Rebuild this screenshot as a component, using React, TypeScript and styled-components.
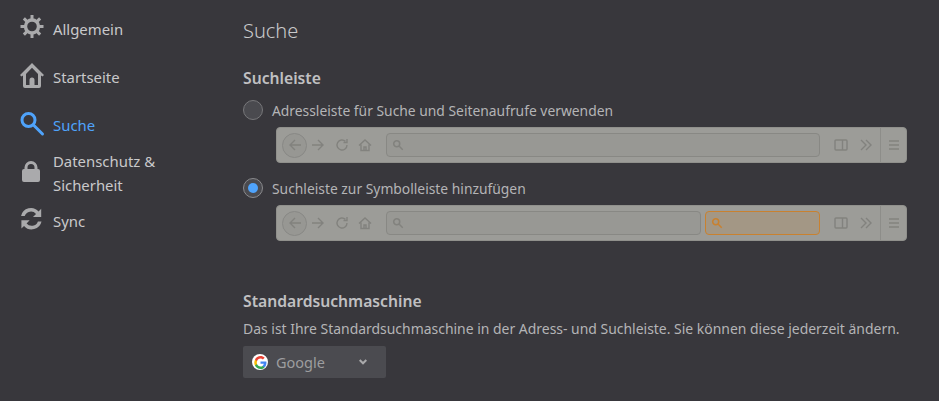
import React from "react";
import styled, { createGlobalStyle } from "styled-components";

const GlobalStyle = createGlobalStyle`
  html, body {
    margin: 0;
    padding: 0;
    background-color: #38373c;
    overflow: hidden;
  }
  body {
    font-family: "Noto Sans", "Open Sans", sans-serif;
    color: #c6c6c8;
  }
`;

const Page = styled.div`
  display: flex;
  width: 939px;
  height: 401px;
  background-color: #38373c;
  overflow: hidden;
`;

const Sidebar = styled.nav`
  width: 243px;
  flex: none;
  padding: 5px 0 0 20px;
  box-sizing: border-box;
  display: flex;
  flex-direction: column;
`;

const NavItem = styled.div<{ $active?: boolean }>`
  height: 48px;
  display: flex;
  align-items: center;
  gap: 9px;
  color: ${(p) => (p.$active ? "#4fa3fb" : "#c9c9cb")};
  font-size: 14.9px;
  line-height: 24px;
`;

const NavIcon = styled.svg`
  width: 24px;
  height: 24px;
  flex: none;
  fill: #aaaaac;
  overflow: visible;
`;

const NavLabel = styled.span`
  width: 130px;
`;

const Content = styled.main`
  flex: 1;
  padding: 15px 32px 0 0;
  min-width: 0;
`;

const Title = styled.h1`
  margin: 0;
  font-size: 20px;
  font-weight: 300;
  line-height: 32px;
  color: #c9c9cb;
`;

const SectionTitle = styled.h2<{ $top: number }>`
  margin: ${(p) => p.$top}px 0 0;
  font-size: 15.7px;
  font-weight: 600;
  line-height: 24px;
  color: #c0c0c2;
`;

const RadioRow = styled.div`
  display: flex;
  align-items: center;
  height: 20px;
  gap: 9px;
  font-size: 13.85px;
  color: #b4b4b6;
`;

const Radio = styled.span<{ $checked?: boolean }>`
  width: 20px;
  height: 20px;
  box-sizing: border-box;
  flex: none;
  border-radius: 50%;
  border: 1px solid ${(p) => (p.$checked ? "#8a8a8d" : "#77777a")};
  background-color: #4a4a4f;
  display: flex;
  align-items: center;
  justify-content: center;

  &::after {
    content: "";
    display: ${(p) => (p.$checked ? "block" : "none")};
    width: 10px;
    height: 10px;
    border-radius: 50%;
    background-color: #4fa3fb;
  }
`;

const Option = styled.div<{ $top: number }>`
  margin-top: ${(p) => p.$top}px;
`;

const Toolbar = styled.div`
  box-sizing: border-box;
  margin: 7px 0 0 33px;
  width: 631px;
  height: 36px;
  background-color: #9c9c98;
  border: 1px solid #90908c;
  border-radius: 4px;
  display: flex;
  align-items: center;
  padding: 0 5px;
`;

const BackButton = styled.span`
  width: 25px;
  height: 25px;
  box-sizing: border-box;
  flex: none;
  border-radius: 50%;
  border: 1px solid #888885;
  background-color: #979793;
  display: flex;
  align-items: center;
  justify-content: center;
`;

const ToolIcon = styled.svg<{ $left?: number }>`
  flex: none;
  width: 14px;
  height: 14px;
  margin-left: ${(p) => p.$left ?? 0}px;
  fill: none;
  stroke: #82827e;
  stroke-width: 1.4;
`;

const UrlBar = styled.div`
  box-sizing: border-box;
  height: 24px;
  flex: 1;
  margin-left: 14px;
  border-radius: 4px;
  border: 1px solid #888884;
  background-color: #989894;
  display: flex;
  align-items: center;
  padding-left: 5px;
`;

const SearchBar = styled(UrlBar)`
  flex: none;
  width: 115px;
  margin-left: 4px;
  border-color: #c9812f;
  background-color: #a39785;
`;

const Divider = styled.span`
  width: 1px;
  align-self: stretch;
  background-color: #8d8d89;
  margin-left: 7px;
`;

const Description = styled.p`
  margin: 4px 0 0;
  font-size: 13.94px;
  line-height: 24px;
  color: #b4b4b6;
  white-space: nowrap;
`;

const Select = styled.div`
  margin-top: 5px;
  box-sizing: border-box;
  width: 143px;
  height: 32px;
  border-radius: 2px;
  background-color: #4b4b50;
  display: flex;
  align-items: center;
  padding-left: 9px;
  font-size: 14.5px;
  color: #9d9d9f;
`;

const GoogleBadge = styled.span`
  width: 16px;
  height: 16px;
  flex: none;
  border-radius: 50%;
  background-color: #fff;
  display: flex;
  align-items: center;
  justify-content: center;
  margin-right: 8px;
`;

const Chevron = styled.svg`
  width: 8px;
  height: 6px;
  margin-left: auto;
  margin-right: 19px;
  fill: none;
  stroke: #aaaaac;
  stroke-width: 2;
`;

const Gear = () => (
  <NavIcon viewBox="0 0 24 24">
    <g transform="translate(12 9.5)">
      <circle r="6.500" fill="none" stroke="#aaaaac" strokeWidth="3.400" />
      {[0, 45, 90, 135, 180, 225, 270, 315].map((a) => (
        <rect key={a} x="-1.500" y="-11.500" width="3" height="5" transform={`rotate(${a})`} />
      ))}
    </g>
  </NavIcon>
);

const House = () => (
  <NavIcon viewBox="0 0 24 24">
    <path
      fillRule="evenodd"
      d="M12-2 0 10l1.500 1.500L3 10.500V21a2 2 0 0 0 2 2h14a2 2 0 0 0 2-2V10.500l1.500 1L24 10zM6 9 12 2.800 18 9v11h-3.500v-5a2.500 2.500 0 0 0-5 0v5H6z"
    />
    <rect x="11" y="15" width="2" height="2" />
  </NavIcon>
);

const Magnifier = () => (
  <NavIcon viewBox="0 0 24 24" style={{ fill: "none" }}>
    <circle cx="8.500" cy="7" r="6.500" stroke="#4fa3fb" strokeWidth="3" />
    <path d="M13.500 12 22.500 21" stroke="#4fa3fb" strokeWidth="3" strokeLinecap="round" />
  </NavIcon>
);

const Lock = () => (
  <NavIcon viewBox="0 0 24 24">
    <path
      fillRule="evenodd"
      d="M4.500 8V6.500a6.500 6.500 0 0 1 13 0V8H18a2 2 0 0 1 2 2v9a2 2 0 0 1-2 2H4a2 2 0 0 1-2-2v-9a2 2 0 0 1 2-2zm3 0h7V6.500a3.500 3.500 0 0 0-7 0z"
    />
  </NavIcon>
);

const SyncIcon = () => (
  <NavIcon viewBox="0 0 24 24">
    <path
      d="M20 3v7.500h-7.500l2.800-2.800A6 6 0 0 0 5 9.500H1.700A9.200 9.200 0 0 1 17.600 5.400zM2 21v-7.500h7.500l-2.800 2.800A6 6 0 0 0 17 14.500h3.300a9.200 9.200 0 0 1-15.900 4.100z"
      transform="translate(-.8 -3.500) scale(1.100)"
    />
  </NavIcon>
);

const MiniSearch = ({ color }: { color?: string }) => (
  <ToolIcon viewBox="0 0 14 14" style={color ? { stroke: color, width: 12, height: 12 } : { width: 12, height: 12 }}>
    <circle cx="5.500" cy="5.500" r="3.500" strokeWidth="1.800" />
    <path d="M8.500 8.500 12.500 12.500" strokeWidth="1.800" />
  </ToolIcon>
);

const PreviewBar = ({ withSearch }: { withSearch?: boolean }) => (
  <Toolbar>
    <BackButton>
      <ToolIcon viewBox="0 0 14 14">
        <path d="M13 7H2M7 2 2 7l5 5" />
      </ToolIcon>
    </BackButton>
    <ToolIcon viewBox="0 0 14 14" $left={4}>
      <path d="M1 7h11M7 2l5 5-5 5" />
    </ToolIcon>
    <ToolIcon viewBox="0 0 14 14" $left={10}>
      <path d="M12 7a5 5 0 1 1-1.600-3.700M12 1v3.500H8.500" />
    </ToolIcon>
    <ToolIcon viewBox="0 0 14 14" $left={9}>
      <path d="M1 7.500 7 2l6 5.500M3 6.500V12.500h8V6.500M6 12.500V9h2v3.500" />
    </ToolIcon>
    <UrlBar>
      <MiniSearch />
    </UrlBar>
    {withSearch && (
      <SearchBar>
        <MiniSearch color="#c9812f" />
      </SearchBar>
    )}
    <ToolIcon viewBox="0 0 14 14" $left={14}>
      <rect x="1" y="2" width="12" height="10" rx="1" />
      <path d="M8.500 2v10" />
    </ToolIcon>
    <ToolIcon viewBox="0 0 14 14" $left={11}>
      <path d="M2 2l5 5-5 5M7 2l5 5-5 5" />
    </ToolIcon>
    <Divider />
    <ToolIcon viewBox="0 0 14 14" $left={6}>
      <path d="M2 3h10M2 7h10M2 11h10" />
    </ToolIcon>
  </Toolbar>
);

export default function App() {
  return (
    <Page>
      <GlobalStyle />
      <Sidebar>
        <NavItem>
          <Gear />
          <NavLabel>Allgemein</NavLabel>
        </NavItem>
        <NavItem>
          <House />
          <NavLabel>Startseite</NavLabel>
        </NavItem>
        <NavItem $active>
          <Magnifier />
          <NavLabel>Suche</NavLabel>
        </NavItem>
        <NavItem>
          <Lock />
          <NavLabel>Datenschutz & Sicherheit</NavLabel>
        </NavItem>
        <NavItem>
          <SyncIcon />
          <NavLabel>Sync</NavLabel>
        </NavItem>
      </Sidebar>
      <Content>
        <Title>Suche</Title>
        <SectionTitle $top={19}>Suchleiste</SectionTitle>
        <Option $top={10}>
          <RadioRow>
            <Radio />
            Adressleiste für Suche und Seitenaufrufe verwenden
          </RadioRow>
          <PreviewBar />
        </Option>
        <Option $top={15}>
          <RadioRow>
            <Radio $checked />
            Suchleiste zur Symbolleiste hinzufügen
          </RadioRow>
          <PreviewBar withSearch />
        </Option>
        <SectionTitle $top={48}>Standardsuchmaschine</SectionTitle>
        <Description>
          Das ist Ihre Standardsuchmaschine in der Adress- und Suchleiste. Sie können diese jederzeit ändern.
        </Description>
        <Select>
          <GoogleBadge>
            <svg width="13" height="13" viewBox="0 0 24 24">
              <path fill="#4285F4" d="M23 12.300c0-.8-.1-1.600-.2-2.300H12v4.300h6.200a5.300 5.300 0 0 1-2.300 3.500v2.900h3.700c2.200-2 3.400-5 3.400-8.400z" />
              <path fill="#34A853" d="M12 24c3.100 0 5.700-1 7.600-2.800l-3.700-2.900c-1 .7-2.300 1.100-3.900 1.100-3 0-5.500-2-6.400-4.700H1.800v3C3.700 21.500 7.600 24 12 24z" />
              <path fill="#FBBC05" d="M5.600 14.700a7.200 7.200 0 0 1 0-4.600v-3H1.800a12 12 0 0 0 0 10.600z" />
              <path fill="#EA4335" d="M12 4.800c1.700 0 3.200.6 4.400 1.700l3.300-3.300C17.700 1.200 15.100 0 12 0 7.600 0 3.700 2.500 1.800 6.600l3.800 3C6.500 6.800 9 4.800 12 4.800z" />
            </svg>
          </GoogleBadge>
          Google
          <Chevron viewBox="0 0 8 6">
            <path d="M.7 1 4 4.300 7.300 1" />
          </Chevron>
        </Select>
      </Content>
    </Page>
  );
}
